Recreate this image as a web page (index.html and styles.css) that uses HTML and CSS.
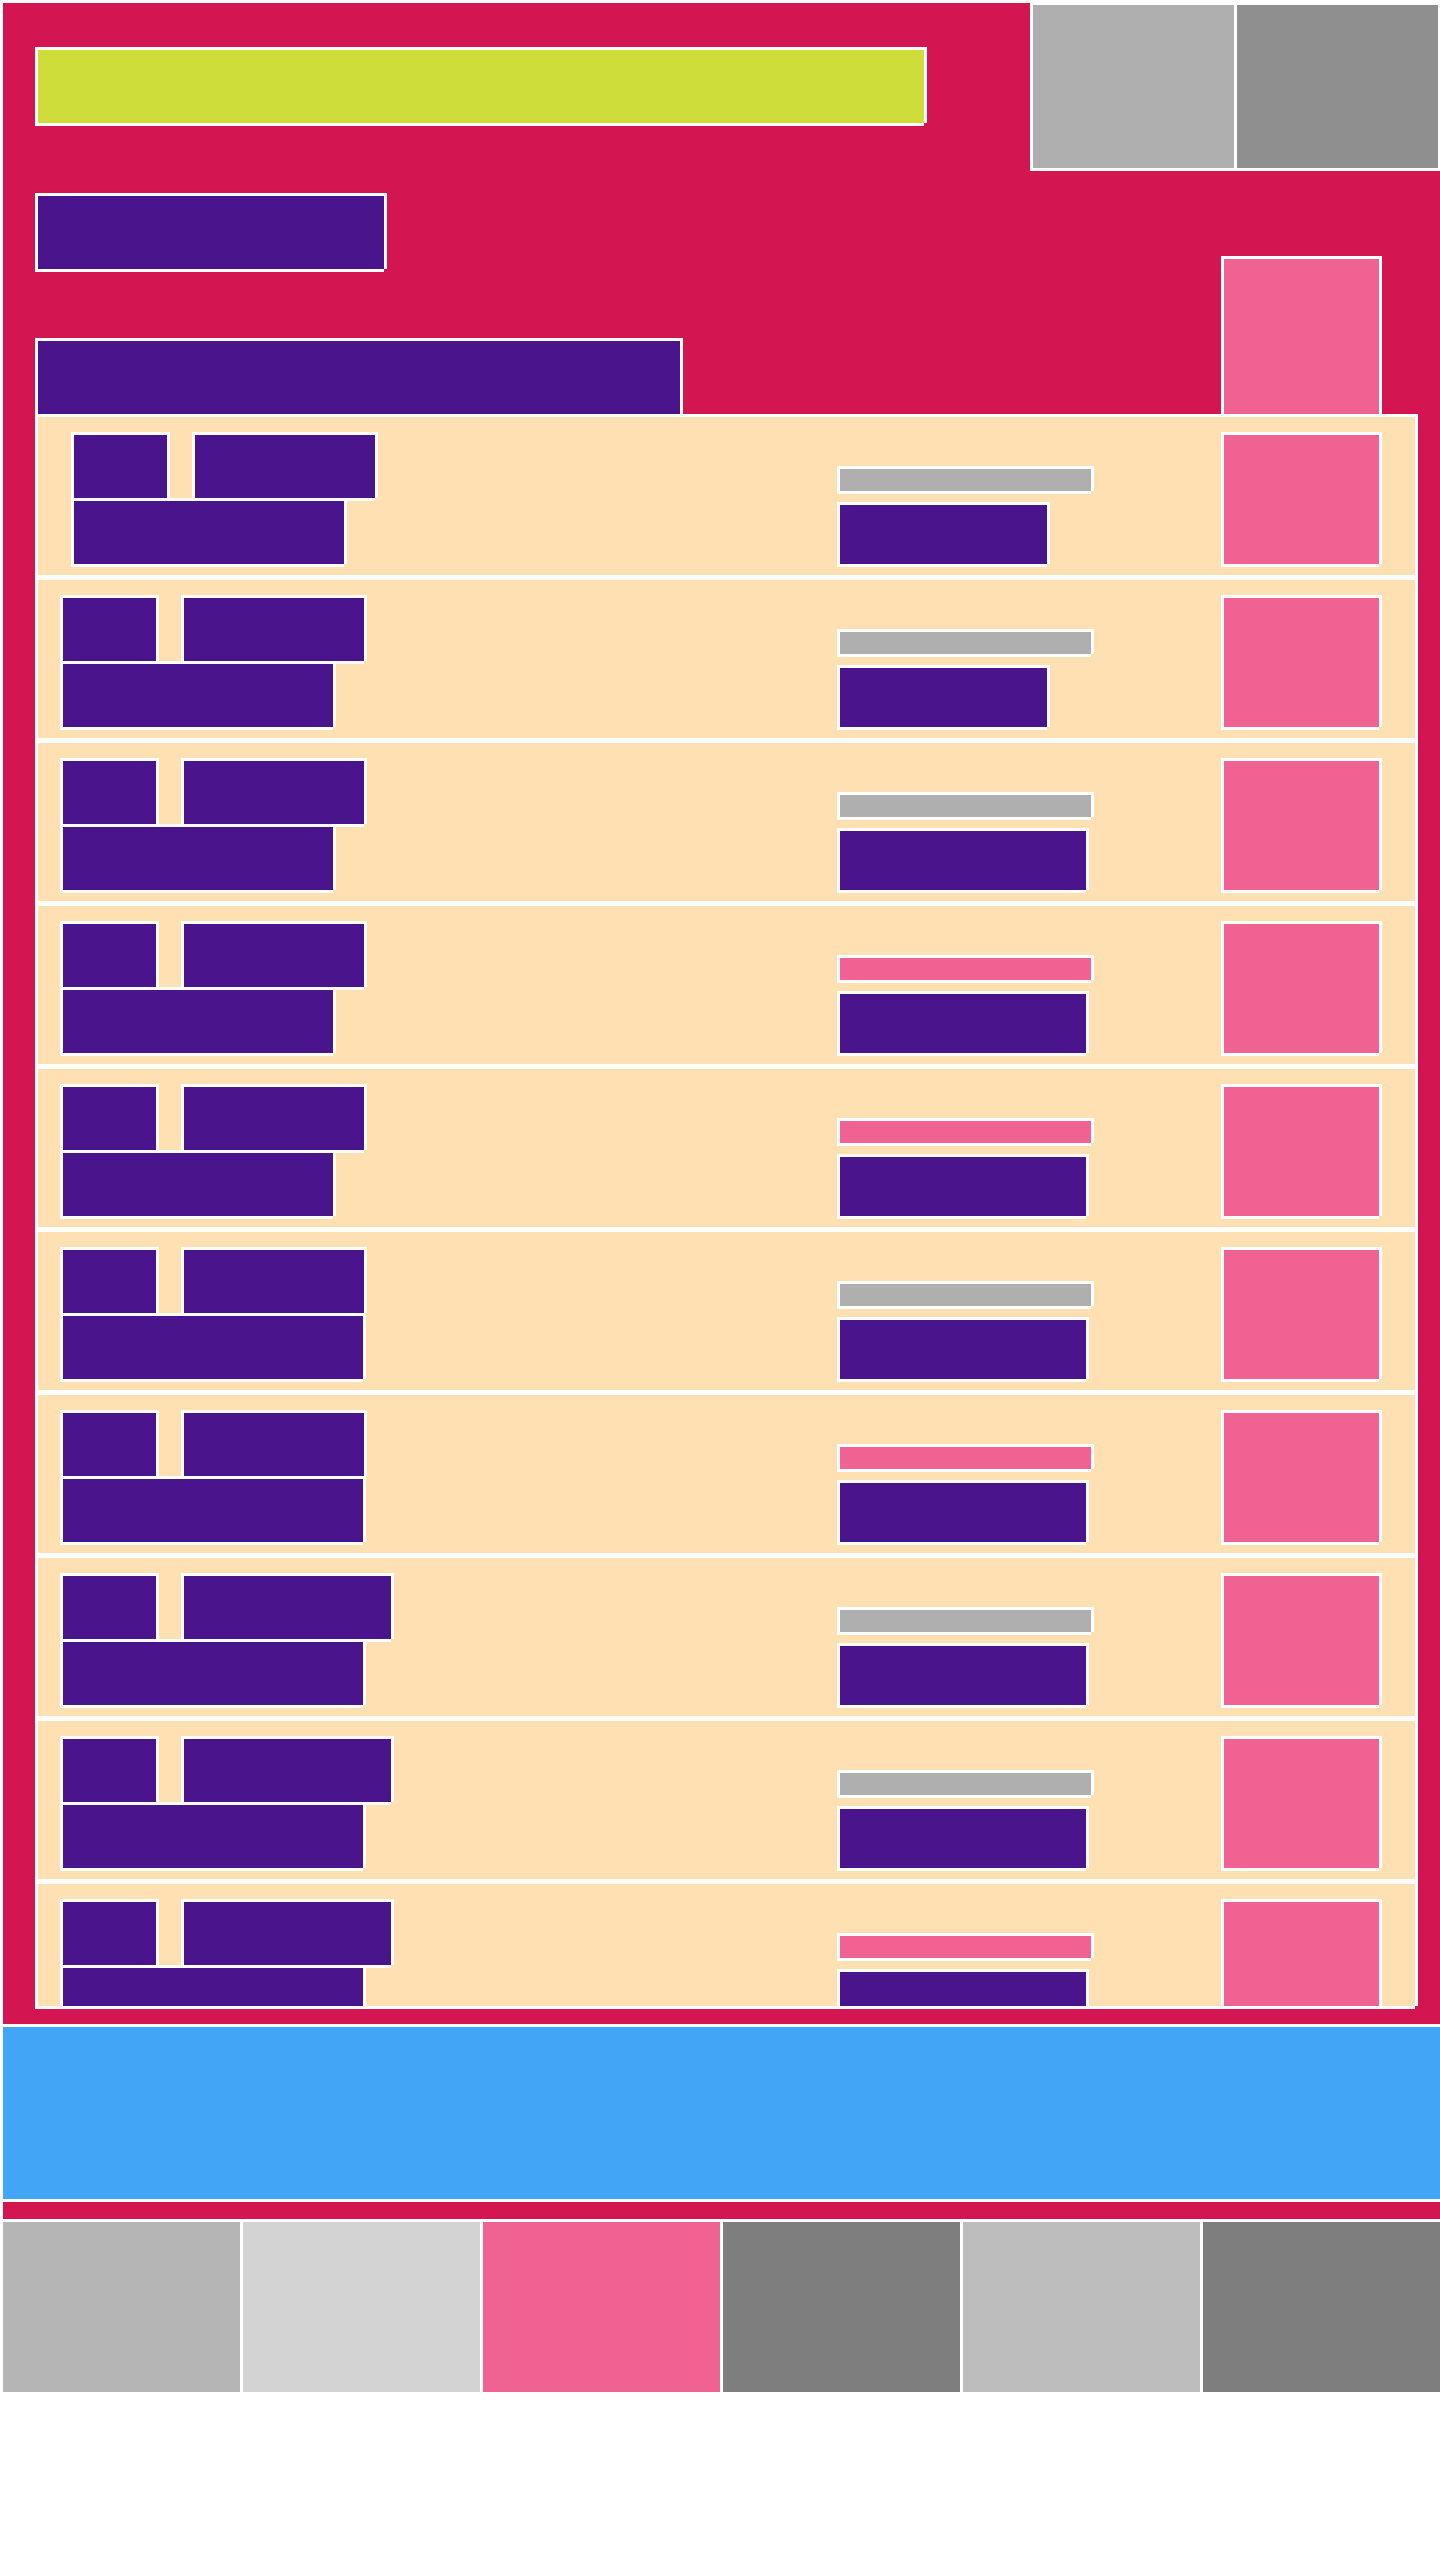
FILE: index.html
```html
<!DOCTYPE html>
<html>
  <head>
    <meta charset="utf-8">
    <title>Layout</title>
    <link rel="stylesheet" href="styles.css">
  </head>
  <body>
    <div id="app">
      <div id="toolbar">
        <div class="tool light"></div>
        <div class="tool dark"></div>
      </div>
      <div id="head">
        <div class="head-main">
          <div class="box title"></div>
          <div class="box tag"></div>
          <div class="box heading"></div>
        </div>
        <div class="box aside"></div>
      </div>
      <div class="box" id="list">
        <div class="row first">
          <div class="row-main">
            <div class="line"><div class="box a"></div><div class="box b"></div></div>
            <div class="box c"></div>
          </div>
          <div class="row-side"><div class="box bar"></div><div class="box d"></div></div>
          <div class="box thumb"></div>
        </div>
        <div class="row">
          <div class="row-main">
            <div class="line"><div class="box a"></div><div class="box b"></div></div>
            <div class="box c"></div>
          </div>
          <div class="row-side"><div class="box bar"></div><div class="box d"></div></div>
          <div class="box thumb"></div>
        </div>
        <div class="row">
          <div class="row-main">
            <div class="line"><div class="box a"></div><div class="box b"></div></div>
            <div class="box c"></div>
          </div>
          <div class="row-side"><div class="box bar"></div><div class="box d wide"></div></div>
          <div class="box thumb"></div>
        </div>
        <div class="row">
          <div class="row-main">
            <div class="line"><div class="box a"></div><div class="box b"></div></div>
            <div class="box c"></div>
          </div>
          <div class="row-side"><div class="box bar hot"></div><div class="box d wide"></div></div>
          <div class="box thumb"></div>
        </div>
        <div class="row">
          <div class="row-main">
            <div class="line"><div class="box a"></div><div class="box b"></div></div>
            <div class="box c"></div>
          </div>
          <div class="row-side"><div class="box bar hot"></div><div class="box d wide"></div></div>
          <div class="box thumb"></div>
        </div>
        <div class="row">
          <div class="row-main">
            <div class="line"><div class="box a"></div><div class="box b"></div></div>
            <div class="box c wide"></div>
          </div>
          <div class="row-side"><div class="box bar"></div><div class="box d wide"></div></div>
          <div class="box thumb"></div>
        </div>
        <div class="row">
          <div class="row-main">
            <div class="line"><div class="box a"></div><div class="box b"></div></div>
            <div class="box c wide"></div>
          </div>
          <div class="row-side"><div class="box bar hot"></div><div class="box d wide"></div></div>
          <div class="box thumb"></div>
        </div>
        <div class="row">
          <div class="row-main">
            <div class="line"><div class="box a"></div><div class="box b wide"></div></div>
            <div class="box c wide"></div>
          </div>
          <div class="row-side"><div class="box bar"></div><div class="box d wide"></div></div>
          <div class="box thumb"></div>
        </div>
        <div class="row">
          <div class="row-main">
            <div class="line"><div class="box a"></div><div class="box b wide"></div></div>
            <div class="box c wide"></div>
          </div>
          <div class="row-side"><div class="box bar"></div><div class="box d wide"></div></div>
          <div class="box thumb"></div>
        </div>
        <div class="row">
          <div class="row-main">
            <div class="line"><div class="box a"></div><div class="box b wide"></div></div>
            <div class="box c wide"></div>
          </div>
          <div class="row-side"><div class="box bar hot"></div><div class="box d wide"></div></div>
          <div class="box thumb"></div>
        </div>
      </div>
    </div>
    <div id="banner"></div>
    <div id="strip"></div>
    <div id="tiles">
      <div class="tile t1"></div>
      <div class="tile t2"></div>
      <div class="tile t3"></div>
      <div class="tile t4"></div>
      <div class="tile t5"></div>
      <div class="tile t6"></div>
    </div>
  </body>
</html>
```

FILE: styles.css
```css
* {
  margin:0;
  padding:0;
  box-sizing: border-box;
}
body {
  background: #fff;
  padding: 3px 0 0 3px;
  font-family: "Liberation Sans", sans-serif;
}

/* boxes get a white frame with the bottom-right corner cut away */
.box {
  border: 3px solid #fff;
  clip-path: polygon(0 0, 100% 0, 100% calc(100% - 3px), calc(100% - 3px) calc(100% - 3px), calc(100% - 3px) 100%, 0 100%);
}

#app {
  position: relative;
  background: #d31652;
  padding: 44px 22px 15px 32px;
}

#toolbar {
  position: absolute;
  top: 0;
  right: 0;
  width: 410px;
  height: 168px;
  display: flex;
  gap: 3px;
  background: #fff;
  border-style: solid;
  border-color: #fff;
  border-width: 2px 2px 3px 3px;
}
#toolbar .tool {
  flex: 1;
}
.tool.light { background: #afafaf; }
.tool.dark { background: #8f8f8f; }

#head {
  display: flex;
  justify-content: space-between;
  align-items: flex-end;
}
.title {
  width: 892px;
  height: 79px;
  background: #cfdd3b;
  margin-bottom: 67px;
}
.tag {
  width: 352px;
  height: 79px;
  background: #4a148c;
  margin-bottom: 66px;
}
.heading {
  width: 648px;
  height: 79px;
  background: #4a148c;
}
.aside {
  width: 161px;
  height: 161px;
  margin-right: 36px;
  background: #f06292;
}

#list {
  margin-top: -3px;
  height: 1595px;
  overflow: hidden;
  background: #fff;
  display: flex;
  flex-direction: column;
  gap: 5px;
}

.row {
  flex-shrink: 0;
  height: 158px;
  display: flex;
  background: #ffe0b2;
  padding: 15px 33px 8px 22px;
}
.row.first {
  padding-left: 33px;
}
.row-main {
  flex: 1;
}
.line {
  display: flex;
  gap: 22px;
}
.a, .b, .c, .d {
  background: #4a148c;
}
.a {
  width: 99px;
  height: 69px;
}
.b {
  width: 186px;
  height: 69px;
}
.b.wide { width: 213px; }
.c {
  width: 276px;
  height: 69px;
  margin-top: -3px;
}
.c.wide { width: 306px; }

.row-side {
  width: 257px;
  align-self: flex-end;
  display: flex;
  flex-direction: column;
  gap: 8px;
  margin-right: 127px;
}
.bar {
  height: 28px;
  background: #afafaf;
}
.bar.hot { background: #f06292; }
.d {
  width: 213px;
  height: 65px;
}
.d.wide { width: 252px; }

.thumb {
  width: 161px;
  height: 135px;
  background: #f06292;
}

#banner {
  margin-top: 3px;
  height: 172px;
  background: #42a5f5;
}
#strip {
  margin-top: 3px;
  height: 17px;
  background: #d31652;
}
#tiles {
  margin-top: 3px;
  display: flex;
  gap: 3px;
}
.tile {
  flex: 1;
  height: 170px;
}
.t1 { background: #b5b5b5; }
.t2 { background: #d3d3d3; }
.t3 { background: #f06292; }
.t4 { background: #7e7e7e; }
.t5 { background: #bdbdbd; }
.t6 { background: #7e7e7e; }
```
